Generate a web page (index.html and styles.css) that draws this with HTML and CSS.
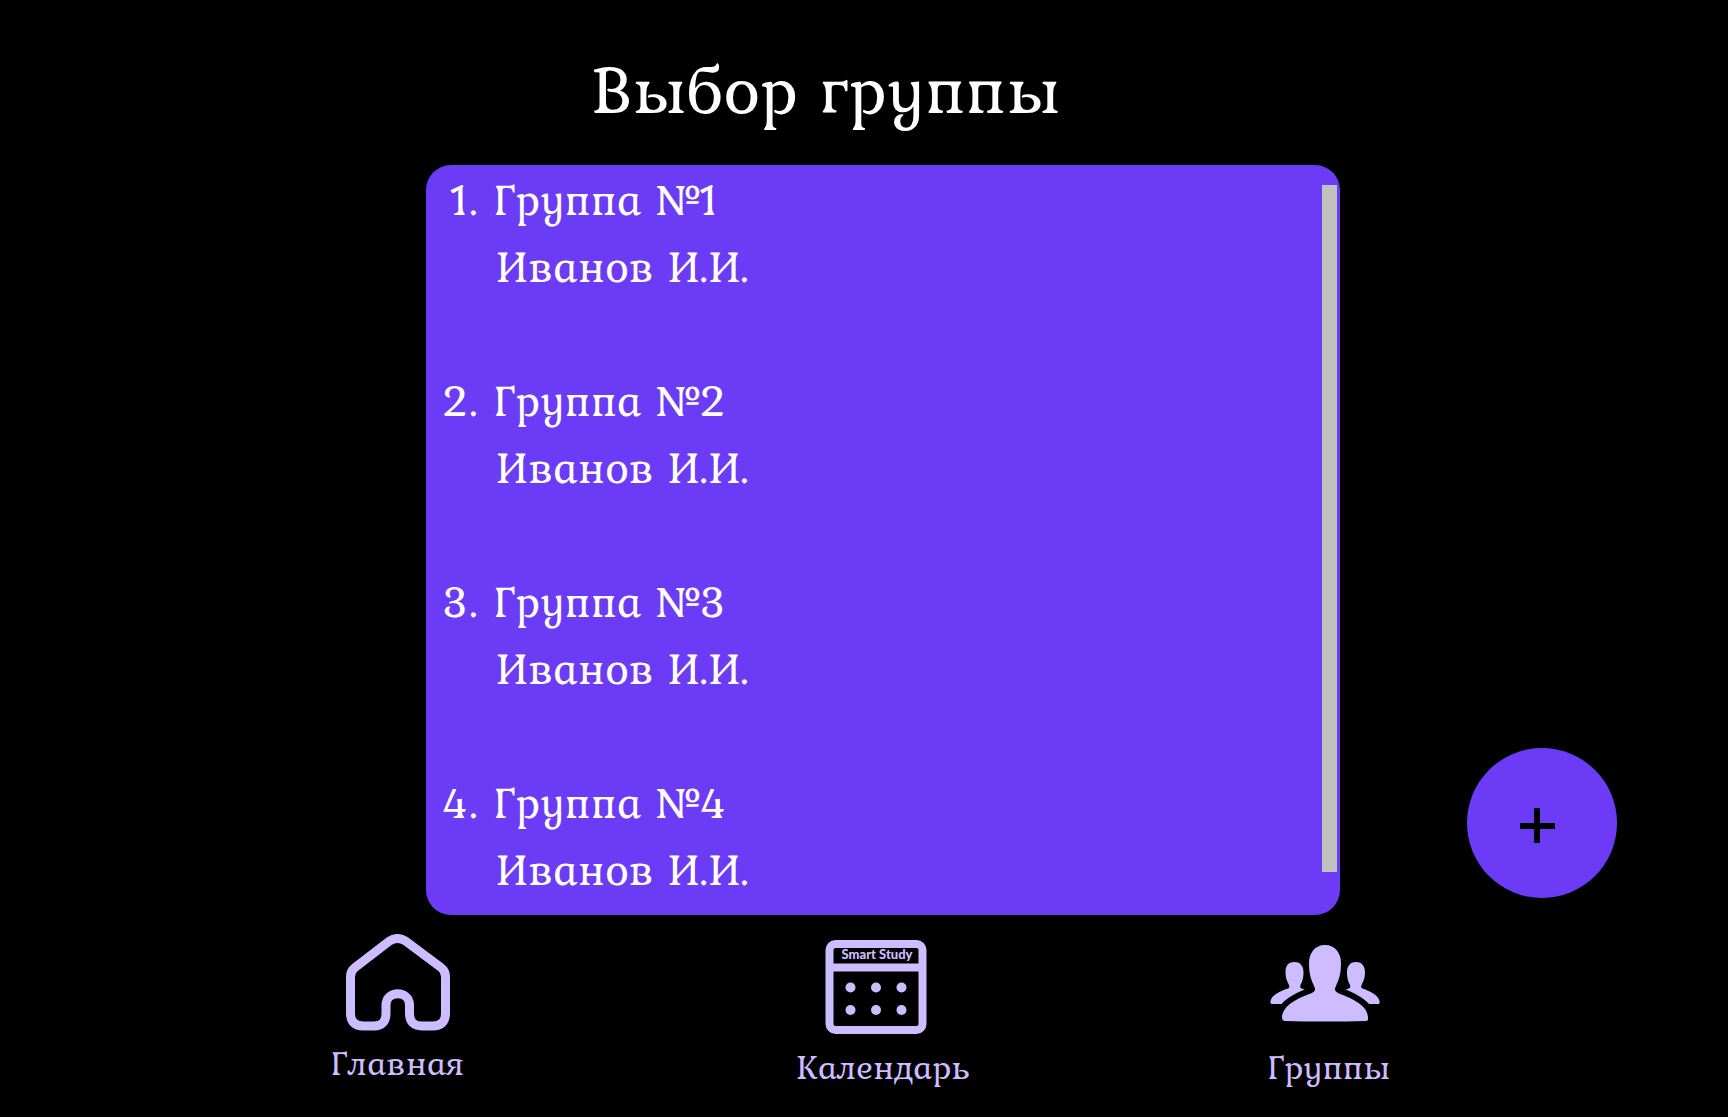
FILE: index.html
```html
<!DOCTYPE html>
<html lang="ru">
<head>
  <meta charset="utf-8">
  <meta name="viewport" content="width=device-width, initial-scale=1">
  <title>Выбор группы</title>
  <link rel="stylesheet" href="styles.css">
</head>
<body>
  <header class="header">
    <h1 class="title">Выбор группы</h1>
  </header>

  <main class="main">
    <section class="panel" aria-label="Список групп">
      <ol class="groups">
        <li class="group"><span class="number">1.</span><span class="name">Группа №1</span><span class="teacher">Иванов И.И.</span></li>
        <li class="group"><span class="number">2.</span><span class="name">Группа №2</span><span class="teacher">Иванов И.И.</span></li>
        <li class="group"><span class="number">3.</span><span class="name">Группа №3</span><span class="teacher">Иванов И.И.</span></li>
        <li class="group"><span class="number">4.</span><span class="name">Группа №4</span><span class="teacher">Иванов И.И.</span></li>
      </ol>
      <div class="scrollbar"></div>
    </section>
    <button class="add" type="button" aria-label="Добавить группу">
      <svg viewBox="0 0 150 150" aria-hidden="true"><path d="M53 78H88M70 60V95" stroke="#000" stroke-width="6"/></svg>
    </button>
  </main>

  <nav class="nav">
    <a class="tab" href="#home">
      <svg class="icon" width="110" height="100" viewBox="0 0 110 100" aria-hidden="true">
        <path d="M7.500 42.500Q7.500 37 12 33.500L46.500 7Q54.500 2 62.500 7L98 33.500Q102.500 37 102.500 42.500V79Q102.500 92 89.500 92H79Q66.500 92 66.500 79V71C66.500 56 43 56 43 71V79Q43 92 31 92H20.500Q7.500 92 7.500 79Z" fill="none" stroke="#cdbcff" stroke-width="9" stroke-linejoin="round"/>
      </svg>
      <span class="label">Главная</span>
    </a>
    <a class="tab" href="#calendar">
      <svg class="icon" width="124" height="104" viewBox="0 0 124 104" aria-hidden="true">
        <rect x="8.500" y="10" width="93" height="86" rx="6" fill="none" stroke="#cdbcff" stroke-width="8"/>
        <path d="M8 33.500H102" stroke="#cdbcff" stroke-width="8"/>
        <g fill="#cdbcff">
          <circle cx="29.500" cy="53.500" r="5"/><circle cx="55" cy="53.500" r="5"/><circle cx="80.500" cy="53.500" r="5"/>
          <circle cx="29.500" cy="76" r="5"/><circle cx="55" cy="76" r="5"/><circle cx="80.500" cy="76" r="5"/>
          <text class="brand" x="56" y="25" text-anchor="middle">Smart Study</text>
        </g>
      </svg>
      <span class="label">Календарь</span>
    </a>
    <a class="tab" href="#groups">
      <svg class="icon" width="118" height="104" viewBox="0 0 118 104" aria-hidden="true">
        <g fill="#cdbcff">
          <path d="M55 11C65 11 71 19 71 29C71 42 68 47 66 52C64 56 65 57 68 59C83 65 97 71 98 83V85Q98 87 95 87Q55 88 15 87Q12 87 12 83C13 71 28 64 42 59C45 57 46 56 44 52C42 47 39 42 39 29C39 19 45 11 55 11Z"/>
          <path d="M24.500 28C31 28 33.500 33 33.500 38C33.500 45 32 48 30.500 51C29.500 54 31 54.500 35 55.500C26 59 18 63 11.500 70H2Q0 70 .5 67C2 61 10 57 18 54.500C20 53.500 19.500 52 18.500 50C16.500 46 15.500 43 15.500 38C15.500 32 18 28 24.500 28Z"/>
          <path d="M86 28C92.500 28 95 33 95 38C95 43 94 46 92 50C91 52 90.500 53.500 92.500 54.500C100 57 108 61 109.500 67Q110 70 108.500 70H99C92.500 63 84 59 75.500 55.500C79.500 54.500 81 54 80 51C78.500 48 77 45 77 38C77 33 79.500 28 86 28Z"/>
        </g>
      </svg>
      <span class="label">Группы</span>
    </a>
  </nav>
</body>
</html>
```
FILE: styles.css
```css
* {
  box-sizing: border-box;
}

body {
  margin: 0;
  background: #000;
  color: #fff;
  font-family: Kurale, "Liberation Serif", serif;
}

.header {
  padding: 44px 76px 33px 0;
  text-align: center;
}

.title {
  margin: 0;
  font-size: 70px;
  line-height: 88px;
  font-weight: 400;
}

.main {
  display: grid;
  grid-template-columns: 426fr 914fr 388fr;
  align-items: end;
}

.panel {
  grid-column: 2;
  display: flex;
  padding-right: 3px;
  border-radius: 25px;
  background: #6c3bf5;
}

.groups {
  flex: 1;
  display: flex;
  flex-direction: column;
  gap: 67px;
  margin: 0;
  padding: 1px 0 12px 16px;
  list-style: none;
  font-size: 45px;
  line-height: 67px;
}

.group {
  display: grid;
  grid-template-columns: 36px 1fr;
  column-gap: 16px;
}

.number {
  text-align: right;
}

.teacher {
  grid-column: 2;
  padding-left: 2px;
}

.scrollbar {
  width: 15px;
  margin: 20px 0 43px;
  background: #c1c1c1;
}

.add {
  width: 150px;
  height: 150px;
  margin: 0 0 17px 127px;
  padding: 0;
  border: 0;
  border-radius: 50%;
  background: #6c3bf5;
  cursor: pointer;
}

.add svg {
  display: block;
}

.nav {
  display: grid;
  grid-template-columns: 485fr 486fr 406fr;
  padding: 19px 196px 22px 155px;
}

.tab {
  display: flex;
  flex-direction: column;
  align-items: center;
  gap: 7px;
  color: #cdbcff;
  text-decoration: none;
}

.icon {
  display: block;
}

.label {
  font-size: 35px;
  line-height: 44px;
}

.brand {
  font: 900 13px Lato, sans-serif;
}
```
